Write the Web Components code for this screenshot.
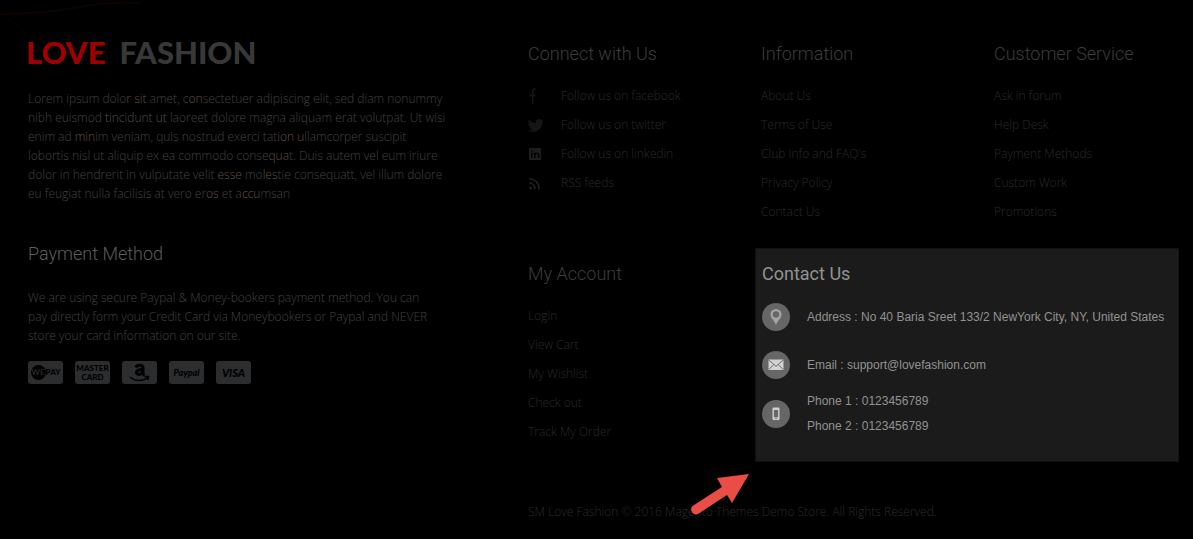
<!DOCTYPE html>
<html lang="en">
<head>
<meta charset="utf-8">
<title>SM Love Fashion</title>
<style>
  body { margin: 0; background: #000; font: 300 12px/19px "Open Sans", sans-serif; color: #2b2b2b; }
</style>
</head>
<body>
<love-footer></love-footer>
<script>
const define = (name, html) => {
  const template = document.createElement('template');
  template.innerHTML = html;
  customElements.define(name, class extends HTMLElement {
    constructor() {
      super();
      this.attachShadow({ mode: 'open' }).append(template.content.cloneNode(true));
    }
  });
};

define('footer-heading', `
<style>
  :host { display: block; }
  h2 { margin: 0; font: var(--heading-weight, 300) 18px/24px Roboto, sans-serif; color: var(--heading, #3c3c3c); white-space: nowrap; }
</style>
<h2><slot></slot></h2>`);

define('link-block', `
<style>
  :host { display: block; }
  nav { display: flex; flex-direction: column; margin-top: 15px; }
</style>
<footer-heading><slot name="title"></slot></footer-heading>
<nav><slot></slot></nav>`);

define('footer-link', `
<style>
  :host { display: block; }
  a { display: flex; align-items: center; color: #2b2b2b; text-decoration: none; line-height: 29px; white-space: nowrap; }
  ::slotted(svg) { width: 16px; height: 16px; margin-right: 17px; fill: #151515; }
</style>
<a href="#"><slot name="icon"></slot><slot></slot></a>`);

define('brand-logo', `
<style>
  :host { display: block; margin-left: -2px; }
  a { display: flex; gap: 14px; font: 900 31px/32px Lato, sans-serif; color: #383838; text-decoration: none; }
  .love { color: #a00000; }
</style>
<a href="#"><span class="love">LOVE</span><span>FASHION</span></a>`);

define('pay-badge', `
<style>
  :host { display: flex; align-items: center; justify-content: center; width: 35px; height: 23px; border-radius: 3px;
    background: #2b2d2f; color: #000; font: 900 9px/9px Lato, sans-serif; text-align: center; }
</style>
<slot></slot>`);

define('contact-row', `
<style>
  :host { display: flex; align-items: center; gap: 17px; min-height: 48px; color: #929292;
    font: 400 12px/25px "Liberation Sans", Arial, sans-serif; }
  .disc { flex: none; display: flex; width: 28px; height: 28px; border-radius: 50%; background: #666; }
  ::slotted(svg) { width: 28px; height: 28px; }
</style>
<span class="disc"><slot name="icon"></slot></span>
<div><slot></slot></div>`);

define('contact-panel', `
<style>
  :host { display: block; position: relative; box-sizing: border-box; padding: 13px 6px 22px;
    background: #1b1b1b; border: 1px solid #111; --heading: #929292; --heading-weight: 400; }
  footer-heading { margin-bottom: 7px; }
  .arrow { position: absolute; left: -72px; top: calc(100% + 9px); width: 70px; height: 48px; }
</style>
<footer-heading>Contact Us</footer-heading>
<contact-row>
  <svg slot="icon" viewBox="0 0 28 28"><path fill="#a5a5a5" fill-rule="evenodd" d="M14 6a5.500 5.500 0 0 0-5.500 5.500C8.500 15 12 17 14 22c2-5 5.500-7 5.500-10.500A5.500 5.500 0 0 0 14 6zm0 2.200a3.200 3.200 0 1 1 0 6.400 3.200 3.200 0 0 1 0-6.400z"/></svg>
  Address : No 40 Baria Sreet 133/2 NewYork City, NY, United States
</contact-row>
<contact-row>
  <svg slot="icon" viewBox="0 0 28 28"><path fill="#d2d2d2" d="M6.500 8.500h15v10.500h-15z"/><path fill="none" stroke="#666" stroke-width=".9" d="M6.500 8.800 14 15.300l7.500-6.500M6.500 18.700l5.300-5M21.500 18.700l-5.300-5"/></svg>
  Email : support@lovefashion.com
</contact-row>
<contact-row>
  <svg slot="icon" viewBox="0 0 28 28"><path fill="#cfcfcf" fill-rule="evenodd" d="M11.500 7.500h5q1 0 1 1v10.500q0 1-1 1h-5q-1 0-1-1V8.500q0-1 1-1zm.4 2.500v7.200h4.200V10zm1.300 8v1h1.600v-1z"/></svg>
  Phone 1 : 0123456789<br>Phone 2 : 0123456789
</contact-row>
<svg class="arrow" viewBox="0 0 70 48"><path fill="#ea4c46" d="M65 4 33 8l5 9L8.500 36a5 5 0 0 0 5.500 8L43 25l5 8z"/></svg>`);

define('love-footer', `
<style>
  :host { display: block; position: relative; overflow: hidden; padding: 36px 0 16px 28px; }
  .glow { position: absolute; left: 0; top: 0; width: 260px; height: 90px; z-index: -1; fill: none; }
  .layout { display: grid; grid-template-columns: 500fr 665fr; }
  .about p { margin: 0; white-space: nowrap; color: #434343; }
  .intro { padding-top: 21px; }
  .warm { color: #625248; }
  .cool { color: #4a5055; }
  .pay-title { padding: 39px 0 22px; --heading: #5c5c5c; }
  .badges { display: flex; gap: 12px; margin-top: 16px; }
  .small { font-size: 8px; }
  .wepay { display: flex; align-items: center; font-size: 8px; }
  .we { width: 15px; border-radius: 50%; line-height: 15px; background: #000; color: #333; font-weight: 400; }
  .visa { font-size: 11px; }
  .links { display: grid; grid-template-columns: 233fr 233fr 199fr; row-gap: 36px; align-items: start; padding-top: 6px; }
  contact-panel { grid-column: 2 / 4; margin: -14px 14px 0 -6px; }
  .copy { grid-column: 1 / 4; margin: 4px 0 0; line-height: 20px; }
</style>
<svg class="glow" viewBox="0 0 260 90">
  <path stroke="#0c0401" stroke-width="2" d="M0 14c25 0 50-1 80-7s45-4 60-4"/>
  <path stroke="#0b0301" stroke-width="1" d="M0 20l13 13M7 17l20 18M22 16l14 16M52 13l12 13M0 38l11 12M192 70l8 6M201 34c-8 12 2 22-6 36"/>
</svg>
<div class="layout">
  <section class="about">
    <brand-logo></brand-logo>
    <p class="intro">Lorem ipsum dolo<span class="warm">r sit</span> amet, c<span class="warm">on</span>sectetuer adipiscing elit, sed diam nonummy<br>
    nibh euismod <span class="cool">tincidunt ut</span> laoreet dolore magna aliquam erat volutpat. Ut wisi<br>
    enim ad <span class="warm">min</span>im veniam, quis nostrud exerci tat<span class="warm">ion u</span>llamcorper suscipit<br>
    lobortis nisl ut aliquip ex ea commodo conse<span class="warm">qua</span>t. Duis autem vel eum iriure<br>
    dolor in hendrerit in vulputate velit <span class="warm">esse</span> mo<span class="warm">les</span>tie consequatt, vel illum dolore<br>
    eu feugiat nulla facilisis at vero er<span class="warm">os</span> et a<span class="warm">ccu</span>msan</p>
    <footer-heading class="pay-title">Payment Method</footer-heading>
    <p>We are using secure Paypal &amp; Money-bookers payment method. You can<br>
    pay directly form your Credit Card via Moneybookers or Paypal and NEVER<br>
    store your card information on our site.</p>
    <div class="badges">
      <pay-badge><span class="wepay"><span class="we">WE</span><span>PAY</span></span></pay-badge>
      <pay-badge><span class="small">MASTER<br>CARD</span></pay-badge>
      <pay-badge><svg width="23" height="19" viewBox="0 0 23 19"><path fill="none" stroke="#000" stroke-width="3" d="M8 4.500c1-3 7-3 7 .5V10c0 1 .5 2 1.500 2.500M14.500 6.500C11 6.500 8.500 7 8.500 9.500s5 3 6-1"/><path fill="none" stroke="#000" stroke-width="1.600" d="M2 14c5 4.500 13 4.500 18 .5M16.500 13.600l4-.1-.8 3.600"/></svg></pay-badge>
      <pay-badge><em>Paypal</em></pay-badge>
      <pay-badge><em class="visa">VISA</em></pay-badge>
    </div>
  </section>
  <section class="links">
    <link-block>
      <span slot="title">Connect with Us</span>
      <footer-link><svg slot="icon" viewBox="0 0 16 16"><path d="M4 16V8.500H1.500v-2H4V4c0-2.600 1-4 3.500-4v2C6 2 5.600 2.500 5.600 4v2.500h2l-.3 2H5.600V16z"/></svg>Follow us on facebook</footer-link>
      <footer-link><svg slot="icon" viewBox="0 0 16 16"><path d="M16 3.500l-1.600 1.600C14.400 11 10 15 5 15c-2 0-3.500-.5-5-1.400 1.800.1 3.300-.4 4.600-1.400-1.500 0-2.600-1-3-2.200h1.300C1.300 9.500.3 8.200.3 6.700l1.400.4C.3 6 0 4.200.8 2.700 2.500 4.700 5 6 7.800 6.100c-.5-3.600 3.500-5.200 5.700-3l2-.8-1.300 1.700z"/></svg>Follow us on twitter</footer-link>
      <footer-link><svg slot="icon" viewBox="0 0 16 16"><path fill="#1e1e1e" fill-rule="evenodd" d="M1 2h12v12H1zm2 4.500V12h1.600V6.500zM3 4v1.500h1.600V4zm3 2.500V12h1.600V9c0-1.300 2.200-1.500 2.200 0v3h1.600V8.600c0-2.400-2.800-2.700-3.800-1.300v-.8z"/></svg>Follow us on linkedin</footer-link>
      <footer-link><svg slot="icon" viewBox="0 0 16 16" fill="none" stroke="#222" stroke-width="1.600"><circle cx="2.500" cy="13" r="1.300" fill="#222" stroke="none"/><path fill="none" d="M1.200 8c3.500 0 5.800 2.500 5.800 6.300M1.200 4c6 0 9.800 4 9.800 10.300"/></svg>RSS feeds</footer-link>
    </link-block>
    <link-block>
      <span slot="title">Information</span>
      <footer-link>About Us</footer-link>
      <footer-link>Terms of Use</footer-link>
      <footer-link>Club Info and FAQ's</footer-link>
      <footer-link>Privacy Policy</footer-link>
      <footer-link>Contact Us</footer-link>
    </link-block>
    <link-block>
      <span slot="title">Customer Service</span>
      <footer-link>Ask in forum</footer-link>
      <footer-link>Help Desk</footer-link>
      <footer-link>Payment Methods</footer-link>
      <footer-link>Custom Work</footer-link>
      <footer-link>Promotions</footer-link>
    </link-block>
    <link-block>
      <span slot="title">My Account</span>
      <footer-link>Login</footer-link>
      <footer-link>View Cart</footer-link>
      <footer-link>My Wishlist</footer-link>
      <footer-link>Check out</footer-link>
      <footer-link>Track My Order</footer-link>
    </link-block>
    <contact-panel></contact-panel>
    <p class="copy">SM Love Fashion © 2016 Magento Themes Demo Store. All Rights Reserved.</p>
  </section>
</div>`);
</script>
</body>
</html>
